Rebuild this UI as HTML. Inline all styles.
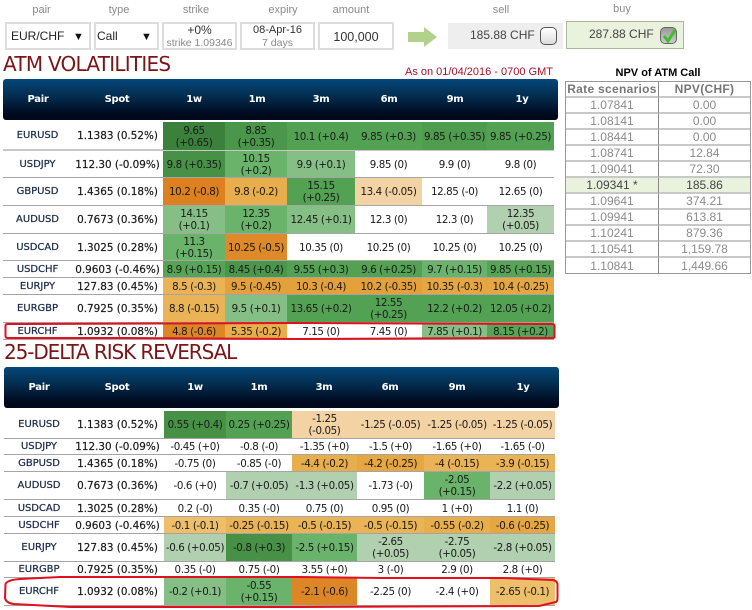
<!DOCTYPE html>
<html><head><meta charset="utf-8">
<style>
html,body{margin:0;padding:0;background:#fff}
body{width:752px;height:610px;position:relative;overflow:hidden;font-family:"Liberation Sans",sans-serif;filter:blur(.3px)}
.a{position:absolute;box-sizing:border-box}
.lb{color:#8a8a8a;font-size:11px;text-align:center;top:3px;height:14px;line-height:14px}
.bx{border:2px solid #ddd;background:#fff;text-align:center;color:#333;font-size:12px;top:22px;height:28px}
.bx small{display:block;color:#888;font-size:10.5px;line-height:12px}
.bx span{display:block;line-height:13px}
.h1{font-family:"DejaVu Sans",sans-serif;color:#7a1518;font-size:20px;line-height:24px;white-space:nowrap}
.hd{background:linear-gradient(#05487a,#022a4c 45%,#000a1e 85%,#000818);border-radius:3px;height:41px}
.hd b{position:absolute;top:0;color:#fff;font:bold 10px/41px "DejaVu Sans",sans-serif;letter-spacing:-.3px;transform:translateX(-50%)}
table{border-collapse:separate;border-spacing:0;table-layout:fixed;position:absolute;font-family:"DejaVu Sans",sans-serif;font-size:10.3px;letter-spacing:-.4px;line-height:12px;color:#1a1a1a}
td{padding:1px 0 0;text-align:center;white-space:nowrap;border-bottom:1px solid #a5a5a5;box-sizing:border-box;overflow:hidden}
td.p{color:#1f2d4a;font-size:10px;letter-spacing:-.05px;-webkit-text-stroke:.25px #1f2d4a}
td.s{font-size:10.4px;letter-spacing:0;-webkit-text-stroke:.2px #1a1a1a}
.g05{background:#b0d0b0}.g1{background:#86bf86}.g15{background:#6ab36a}.g2{background:#56a556}.g25{background:#53a253}.g3{background:#4f9c4f}.g35{background:#4a964a}.g4{background:#469146}.g65{background:#3b813b}
.o05{background:#f3d3a3}.o1{background:#eebf6b}.o15{background:#e9b356}.o2{background:#e8ae4c}.o25{background:#e6a642}.o3{background:#e4a03a}.o35{background:#e39a35}.o4{background:#e09530}.o45{background:#df8f2c}.o5{background:#de8a28}.o6{background:#dd8625}.o8{background:#dc8020}
#n{left:565px;top:81px;width:186px;font-family:"Liberation Sans",sans-serif;font-size:12px;line-height:14px;letter-spacing:0;color:#8b8b8b;border:1px solid #999}
#n td{height:16px;padding:0;border-bottom:2px solid #c8c8c8}
#n td:first-child{border-right:1px solid #888}
#n tr:last-child td{border-bottom:0;height:15px}
</style></head><body>

<div class="a lb" style="left:5px;width:73px">pair</div>
<div class="a lb" style="left:94px;width:50px">type</div>
<div class="a lb" style="left:161px;width:70px">strike</div>
<div class="a lb" style="left:248px;width:70px">expiry</div>
<div class="a lb" style="left:318px;width:66px">amount</div>
<div class="a lb" style="left:491px;width:20px">sell</div>
<div class="a lb" style="left:611px;width:22px;top:2px">buy</div>

<div class="a bx" style="left:5px;width:86px;text-align:left;padding-left:4px;line-height:24px;color:#222">EUR/CHF<span class="a" style="left:66px;top:0;font-size:11px;line-height:26px;color:#111">▼</span></div>
<div class="a bx" style="left:94px;width:65px;text-align:left;padding-left:1px;line-height:24px;color:#222">Call<span class="a" style="left:45px;top:0;font-size:11px;line-height:26px;color:#111">▼</span></div>
<div class="a bx" style="left:162px;width:75px"><span>+0%</span><small>strike 1.09346</small></div>
<div class="a bx" style="left:240px;width:75px;font-size:11px"><span>08-Apr-16</span><small>7 days</small></div>
<div class="a bx" style="left:318px;width:76px;line-height:26px;font-size:12.5px">100,000</div>

<svg class="a" style="left:407px;top:26px" width="31" height="22"><path d="M1 6H17V1L30 11L17 21V16H1Z" fill="#b2d28b"/></svg>

<div class="a" style="left:448px;top:23px;width:115px;height:26px;background:#eee;color:#444;font-size:12px;line-height:25px;padding-left:22px">185.88 CHF</div>
<div class="a" style="left:540px;top:27px;width:17px;height:18px;border:1px solid #555;border-radius:5px;background:linear-gradient(#fff,#ddd)"></div>
<div class="a" style="left:566px;top:21px;width:118px;height:28px;background:#e8f2dc;border:1px solid #a8b898;color:#444;font-size:12px;line-height:25px;padding-left:22px">287.88 CHF</div>
<div class="a" style="left:660px;top:27px;width:17px;height:17px;border:1px solid #666;border-radius:5px;background:linear-gradient(#999,#ccc)"></div>
<svg class="a" style="left:659px;top:26px" width="20" height="20"><path d="M5 10L9 15L16 4" fill="none" stroke="#3fbf2a" stroke-width="3"/></svg>

<div class="a h1" style="left:3px;top:52px;letter-spacing:-.75px">ATM VOLATILITIES</div>
<div class="a" style="left:405px;top:65px;color:#a4122e;font-size:11px;line-height:14px;white-space:nowrap">As on 01/04/2016 - 0700 GMT</div>
<div class="a" style="left:565px;top:66px;width:186px;text-align:center;color:#000;font-size:11px;font-weight:bold;line-height:14px">NPV of ATM Call</div>

<div class="a hd" style="left:3px;top:79px;width:555px"><b style="left:35px">Pair</b><b style="left:114px">Spot</b><b style="left:191px">1w</b><b style="left:254px">1m</b><b style="left:318px">3m</b><b style="left:386px">6m</b><b style="left:452px">9m</b><b style="left:519px">1y</b></div>

<table style="left:3px;top:122px;width:551px">
<colgroup><col style="width:69px"><col style="width:91px"><col style="width:62px"><col style="width:62px"><col style="width:68px"><col style="width:67px"><col style="width:65px"><col style="width:67px"></colgroup>
<tr style="height:29px"><td class="p" style="border-bottom:2px solid #c8c8c8">EURUSD</td><td class="s" style="border-bottom:2px solid #c8c8c8">1.1383 (0.52%)</td><td class="g65" style="border-bottom-color:#c8c8c8">9.65<br>(+0.65)</td><td class="g35" style="border-bottom-color:#c8c8c8">8.85<br>(+0.35)</td><td class="g25" style="border-bottom-color:#c8c8c8">10.1 (+0.4)</td><td class="g25" style="border-bottom-color:#c8c8c8">9.85 (+0.3)</td><td class="g3" style="border-bottom-color:#c8c8c8">9.85 (+0.35)</td><td class="g25" style="border-bottom-color:#c8c8c8">9.85 (+0.25)</td></tr>
<tr style="height:27px"><td class="p">USDJPY</td><td class="s">112.30 (-0.09%)</td><td class="g4">9.8 (+0.35)</td><td class="g15">10.15<br>(+0.2)</td><td class="g1">9.9 (+0.1)</td><td>9.85 (0)</td><td>9.9 (0)</td><td>9.8 (0)</td></tr>
<tr style="height:28px"><td class="p">GBPUSD</td><td class="s">1.4365 (0.18%)</td><td class="o8">10.2 (-0.8)</td><td class="o2">9.8 (-0.2)</td><td class="g25">15.15<br>(+0.25)</td><td class="o05">13.4 (-0.05)</td><td>12.85 (-0)</td><td>12.65 (0)</td></tr>
<tr style="height:28px"><td class="p">AUDUSD</td><td class="s">0.7673 (0.36%)</td><td class="g1">14.15<br>(+0.1)</td><td class="g15">12.35<br>(+0.2)</td><td class="g1">12.45 (+0.1)</td><td>12.3 (0)</td><td>12.3 (0)</td><td class="g05">12.35<br>(+0.05)</td></tr>
<tr style="height:27px"><td class="p">USDCAD</td><td class="s">1.3025 (0.28%)</td><td class="g15">11.3<br>(+0.15)</td><td class="o5">10.25 (-0.5)</td><td>10.35 (0)</td><td>10.25 (0)</td><td>10.25 (0)</td><td>10.25 (0)</td></tr>
<tr style="height:17px"><td class="p">USDCHF</td><td class="s">0.9603 (-0.46%)</td><td class="g2">8.9 (+0.15)</td><td class="g35">8.45 (+0.4)</td><td class="g25">9.55 (+0.3)</td><td class="g25">9.6 (+0.25)</td><td class="g15">9.7 (+0.15)</td><td class="g2">9.85 (+0.15)</td></tr>
<tr style="height:17px"><td class="p">EURJPY</td><td class="s">127.83 (0.45%)</td><td class="o15">8.5 (-0.3)</td><td class="o3">9.5 (-0.45)</td><td class="o3">10.3 (-0.4)</td><td class="o3">10.2 (-0.35)</td><td class="o25">10.35 (-0.3)</td><td class="o25">10.4 (-0.25)</td></tr>
<tr style="height:28px"><td class="p">EURGBP</td><td class="s">0.7925 (0.35%)</td><td class="o15">8.8 (-0.15)</td><td class="g1">9.5 (+0.1)</td><td class="g25">13.65 (+0.2)</td><td class="g25">12.55<br>(+0.25)</td><td class="g25">12.2 (+0.2)</td><td class="g25">12.05 (+0.2)</td></tr>
<tr style="height:17px"><td class="p">EURCHF</td><td class="s">1.0932 (0.08%)</td><td class="o6">4.8 (-0.6)</td><td class="o2">5.35 (-0.2)</td><td>7.15 (0)</td><td>7.45 (0)</td><td class="g1">7.85 (+0.1)</td><td class="g2">8.15 (+0.2)</td></tr>
</table>

<svg class="a" style="left:0;top:315px" width="562" height="30"><path d="M22 9H7Q5.500 9 5.500 11V21Q5.500 23 8 23H120L300 24L500 23H553Q554.500 23 554.500 21V11Q554.500 9 552 9L300 8Z" fill="none" stroke="#e2101f" stroke-width="2"/></svg>

<div class="a h1" style="left:4px;top:340px;letter-spacing:-1.1px">25-DELTA RISK REVERSAL</div>

<div class="a hd" style="left:4px;top:367px;width:555px"><b style="left:35px">Pair</b><b style="left:113px">Spot</b><b style="left:191px">1w</b><b style="left:255px">1m</b><b style="left:320px">3m</b><b style="left:386px">6m</b><b style="left:453px">9m</b><b style="left:519px">1y</b></div>

<table style="left:4px;top:411px;width:551px">
<colgroup><col style="width:70px"><col style="width:90px"><col style="width:62px"><col style="width:66px"><col style="width:65px"><col style="width:67px"><col style="width:66px"><col style="width:65px"></colgroup>
<tr style="height:28px"><td class="p">EURUSD</td><td class="s" style="padding-right:3px">1.1383 (0.52%)</td><td class="g4">0.55 (+0.4)</td><td class="g25">0.25 (+0.25)</td><td class="o05">-1.25<br>(-0.05)</td><td class="o05">-1.25 (-0.05)</td><td class="o05">-1.25 (-0.05)</td><td class="o05">-1.25 (-0.05)</td></tr>
<tr style="height:16px"><td class="p">USDJPY</td><td class="s" style="padding-right:3px">112.30 (-0.09%)</td><td>-0.45 (+0)</td><td>-0.8 (-0)</td><td>-1.35 (+0)</td><td>-1.5 (+0)</td><td>-1.65 (+0)</td><td>-1.65 (-0)</td></tr>
<tr style="height:17px"><td class="p">GBPUSD</td><td class="s" style="padding-right:3px">1.4365 (0.18%)</td><td>-0.75 (0)</td><td>-0.85 (-0)</td><td class="o2">-4.4 (-0.2)</td><td class="o25">-4.2 (-0.25)</td><td class="o15">-4 (-0.15)</td><td class="o15">-3.9 (-0.15)</td></tr>
<tr style="height:28px"><td class="p">AUDUSD</td><td class="s" style="padding-right:3px">0.7673 (0.36%)</td><td>-0.6 (+0)</td><td class="g05">-0.7 (+0.05)</td><td class="g05">-1.3 (+0.05)</td><td>-1.73 (-0)</td><td class="g15">-2.05<br>(+0.15)</td><td class="g05">-2.2 (+0.05)</td></tr>
<tr style="height:17px"><td class="p">USDCAD</td><td class="s" style="padding-right:3px">1.3025 (0.28%)</td><td>0.2 (-0)</td><td>0.35 (-0)</td><td>0.75 (0)</td><td>0.95 (0)</td><td>1 (+0)</td><td>1.1 (0)</td></tr>
<tr style="height:17px"><td class="p">USDCHF</td><td class="s" style="padding-right:3px">0.9603 (-0.46%)</td><td class="o1">-0.1 (-0.1)</td><td class="o15">-0.25 (-0.15)</td><td class="o15">-0.5 (-0.15)</td><td class="o15">-0.5 (-0.15)</td><td class="o2">-0.55 (-0.2)</td><td class="o25">-0.6 (-0.25)</td></tr>
<tr style="height:28px"><td class="p">EURJPY</td><td class="s" style="padding-right:3px">127.83 (0.45%)</td><td class="g05">-0.6 (+0.05)</td><td class="g4">-0.8 (+0.3)</td><td class="g15">-2.5 (+0.15)</td><td class="g05">-2.65<br>(+0.05)</td><td class="g05">-2.75<br>(+0.05)</td><td class="g05">-2.8 (+0.05)</td></tr>
<tr style="height:16px"><td class="p">EURGBP</td><td class="s" style="padding-right:3px">0.7925 (0.35%)</td><td>0.35 (-0)</td><td>0.75 (-0)</td><td>3.55 (+0)</td><td>3 (-0)</td><td>2.9 (0)</td><td>2.8 (+0)</td></tr>
<tr style="height:28px"><td class="p">EURCHF</td><td class="s" style="padding-right:3px">1.0932 (0.08%)</td><td class="g1">-0.2 (+0.1)</td><td class="g15">-0.55<br>(+0.15)</td><td class="o6">-2.1 (-0.6)</td><td>-2.25 (0)</td><td>-2.4 (+0)</td><td class="o1">-2.65 (-0.1)</td></tr>
</table>

<svg class="a" style="left:0;top:570px" width="562" height="40"><path d="M60 7L20 9Q7 10 5.500 14L5 28Q6 33 14 34L70 37H300L539 36L556 32Q557.500 31 557.500 28V14Q557 11 553 10L503 8H380L300 7Z" fill="none" stroke="#e2101f" stroke-width="2"/></svg>

<table id="n">
<colgroup><col style="width:93px"><col style="width:91px"></colgroup>
<tr><td style="font-weight:bold;color:#777;letter-spacing:.3px">Rate scenarios</td><td style="font-weight:bold;color:#777;letter-spacing:.3px">NPV(CHF)</td></tr>
<tr><td>1.07841</td><td>0.00</td></tr>
<tr><td>1.08141</td><td>0.00</td></tr>
<tr><td>1.08441</td><td>0.00</td></tr>
<tr><td>1.08741</td><td>12.84</td></tr>
<tr><td>1.09041</td><td>72.30</td></tr>
<tr style="background:#e8f2dc;color:#444"><td>1.09341 *</td><td>185.86</td></tr>
<tr><td>1.09641</td><td>374.21</td></tr>
<tr><td>1.09941</td><td>613.81</td></tr>
<tr><td>1.10241</td><td>879.36</td></tr>
<tr><td>1.10541</td><td>1,159.78</td></tr>
<tr><td>1.10841</td><td>1,449.66</td></tr>
</table>

</body></html>
